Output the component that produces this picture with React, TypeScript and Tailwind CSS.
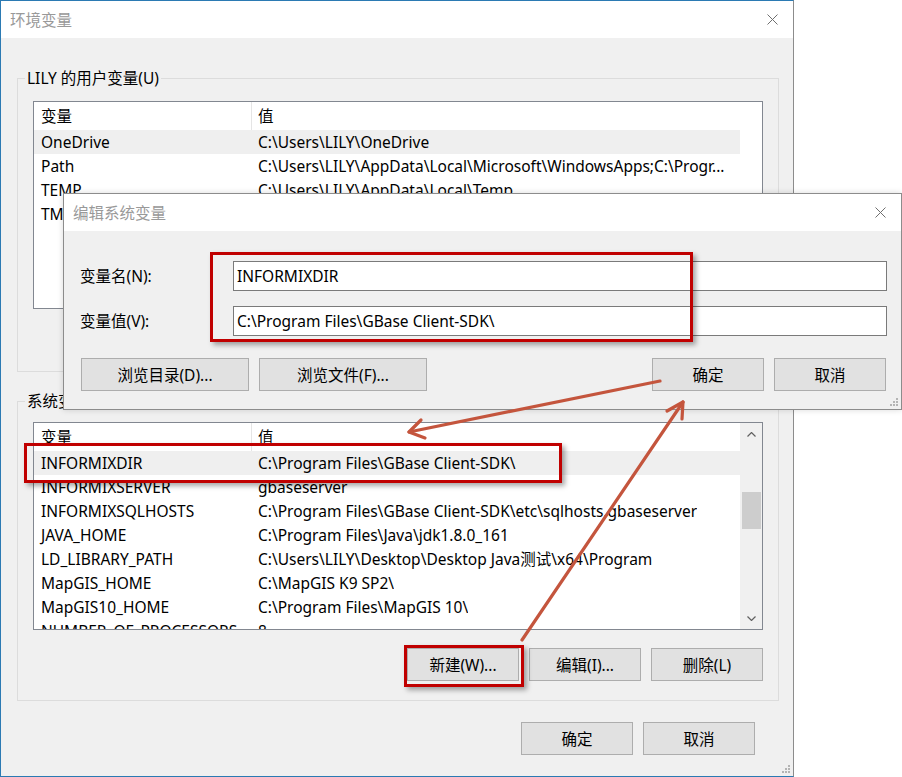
import React from 'react';

type Row = { name: string; value: string; selected?: boolean };

// 用户变量
const userVars: Row[] = [
  { name: 'OneDrive', value: 'C:\\Users\\LILY\\OneDrive', selected: true },
  { name: 'Path', value: 'C:\\Users\\LILY\\AppData\\Local\\Microsoft\\WindowsApps;C:\\Progr...' },
  { name: 'TEMP', value: 'C:\\Users\\LILY\\AppData\\Local\\Temp' },
  { name: 'TMP', value: 'C:\\Users\\LILY\\AppData\\Local\\Temp' },
];

// 系统变量
const sysVars: Row[] = [
  { name: 'INFORMIXDIR', value: 'C:\\Program Files\\GBase Client-SDK\\', selected: true },
  { name: 'INFORMIXSERVER', value: 'gbaseserver' },
  { name: 'INFORMIXSQLHOSTS', value: 'C:\\Program Files\\GBase Client-SDK\\etc\\sqlhosts.gbaseserver' },
  { name: 'JAVA_HOME', value: 'C:\\Program Files\\Java\\jdk1.8.0_161' },
  { name: 'LD_LIBRARY_PATH', value: 'C:\\Users\\LILY\\Desktop\\Desktop Java测试\\x64\\Program' },
  { name: 'MapGIS_HOME', value: 'C:\\MapGIS K9 SP2\\' },
  { name: 'MapGIS10_HOME', value: 'C:\\Program Files\\MapGIS 10\\' },
  { name: 'NUMBER_OF_PROCESSORS', value: '8' },
];

function WinButton({ label, className = '' }: { label: string; className?: string }) {
  return (
    <button
      className={`flex h-[33px] flex-none items-center justify-center border border-[#adadad] bg-[#e1e1e1] text-black ${className}`}
    >
      {label}
    </button>
  );
}

function CloseIcon() {
  return (
    <svg width="11" height="11" viewBox="0 0 11 11" className="flex-none">
      <path d="M0.5 0.5 L10.5 10.5 M10.5 0.5 L0.5 10.5" stroke="#6f6f6f" strokeWidth="1" />
    </svg>
  );
}

function Grip() {
  // 右下角的尺寸调整点
  const dots = [
    [6, 0],
    [3, 3],
    [6, 3],
    [0, 6],
    [3, 6],
    [6, 6],
  ];
  return (
    <svg width="9" height="9" viewBox="0 0 9 9" className="absolute bottom-[2px] right-[2px]">
      {dots.map(([x, y], i) => (
        <rect key={i} x={x} y={y} width="2" height="2" fill="#b4b4b4" />
      ))}
    </svg>
  );
}

function Scrollbar() {
  return (
    <div className="flex w-[22px] flex-none flex-col items-center bg-[#f0f0f0]">
      <div className="flex h-[22px] w-full items-center justify-center">
        <svg width="9" height="5" viewBox="0 0 9 5">
          <path d="M0.5 4.5 L4.5 0.5 L8.5 4.5" fill="none" stroke="#606060" strokeWidth="1.2" />
        </svg>
      </div>
      <div className="mt-[47px] h-[37px] w-[19px] bg-[#cdcdcd]" />
      <div className="flex-1" />
      <div className="flex h-[22px] w-full items-center justify-center">
        <svg width="9" height="5" viewBox="0 0 9 5">
          <path d="M0.5 0.5 L4.5 4.5 L8.5 0.5" fill="none" stroke="#606060" strokeWidth="1.2" />
        </svg>
      </div>
    </div>
  );
}

function VarList({ rows, scrollbar }: { rows: Row[]; scrollbar?: boolean }) {
  return (
    <div className="flex h-[208px] w-[730px] overflow-hidden border border-[#828790] bg-white">
      <div className="w-[706px] flex-none">
        {/* 表头 */}
        <div className="flex h-[28px] items-center">
          <div className="flex h-full w-[218px] items-center border-r border-[#e5e5e5] pl-[7px]">变量</div>
          <div className="pl-[6px]">值</div>
        </div>
        {rows.map((r) => (
          <div key={r.name} className={`flex h-[24px] items-center ${r.selected ? 'bg-[#efefef]' : ''}`}>
            <div className="w-[218px] flex-none overflow-hidden whitespace-nowrap pl-[7px]">{r.name}</div>
            <div className="overflow-hidden whitespace-nowrap pl-[6px]">{r.value}</div>
          </div>
        ))}
      </div>
      {scrollbar && <Scrollbar />}
    </div>
  );
}

function ActionRow() {
  return (
    <div className="flex w-[730px] justify-end gap-[10px]">
      <WinButton label="新建(W)..." className="w-[112px]" />
      <WinButton label="编辑(I)..." className="w-[112px]" />
      <WinButton label="删除(L)" className="w-[112px]" />
    </div>
  );
}

function EditDialog() {
  return (
    <div className="absolute left-[63px] top-[193px] flex h-[217px] w-[839px] flex-col border border-[#8c8c8c] bg-[#f0f0f0] shadow-[0_0_6px_rgba(0,0,0,0.15)]">
      <div className="flex h-[37px] flex-none items-center justify-between bg-white pl-[9px] pr-[15px]">
        <span className="text-[#999999]">编辑系统变量</span>
        <CloseIcon />
      </div>
      <div className="relative flex-1 pt-[30px]">
        <div className="flex h-[30px] items-center">
          <div className="w-[169px] flex-none pl-[16px]">变量名(N):</div>
          <div className="flex h-[30px] w-[654px] items-center border border-[#7a7a7a] bg-white pl-[3px]">INFORMIXDIR</div>
        </div>
        <div className="mt-[15px] flex h-[30px] items-center">
          <div className="w-[169px] flex-none pl-[16px]">变量值(V):</div>
          <div className="flex h-[30px] w-[654px] items-center border border-[#7a7a7a] bg-white pl-[3px]">
            C:\Program Files\GBase Client-SDK\
          </div>
        </div>
        <div className="mt-[22px] flex items-center pl-[17px] pr-[15px]">
          <WinButton label="浏览目录(D)..." className="w-[168px]" />
          <WinButton label="浏览文件(F)..." className="ml-[10px] w-[168px]" />
          <WinButton label="确定" className="ml-auto w-[112px]" />
          <WinButton label="取消" className="ml-[10px] w-[112px]" />
        </div>
        <Grip />
      </div>
    </div>
  );
}

function Annotations() {
  const c = '#c4553d';
  return (
    <>
      {/* 红色标注框 */}
      <div className="pointer-events-none absolute left-[210px] top-[252px] h-[90px] w-[483px] border-[3px] border-[#c00000] shadow-[3px_3px_5px_rgba(0,0,0,0.35)]" />
      <div className="pointer-events-none absolute left-[24px] top-[443px] h-[40px] w-[538px] border-[3px] border-[#c00000] shadow-[3px_3px_5px_rgba(0,0,0,0.35)]" />
      <div className="pointer-events-none absolute left-[404px] top-[645px] h-[42px] w-[120px] border-[3px] border-[#c00000] shadow-[3px_3px_5px_rgba(0,0,0,0.35)]" />
      {/* 箭头 */}
      <svg width="902" height="777" viewBox="0 0 902 777" className="pointer-events-none absolute left-0 top-0">
        <g stroke={c} strokeWidth="3.2" fill="none" strokeLinecap="round" strokeLinejoin="round">
          <path d="M660 381 L409 432" />
          <path d="M425 438 L409 432 L421 420" />
          <path d="M522 640 L683 402" />
          <path d="M667 411 L683 402 L682 419" />
        </g>
      </svg>
    </>
  );
}

export default function App() {
  return (
    <div className="relative h-[777px] w-[902px] overflow-hidden bg-white font-['Noto_Sans','Noto_Sans_CJK_SC',sans-serif] text-[15.5px] leading-[20px] text-black">
      {/* 环境变量 主窗口 */}
      <div className="flex h-[777px] w-[794px] flex-col border border-b-[#2b7ab3] border-l-[#2b7ab3] border-r-[#8c8c8c] border-t-[#2b7ab3]">
        <div className="flex h-[37px] flex-none items-center justify-between bg-white pl-[9px] pr-[15px]">
          <span className="text-[#999999]">环境变量</span>
          <CloseIcon />
        </div>
        <div className="relative flex flex-1 flex-col bg-[#f0f0f0]">
          <fieldset className="ml-[16px] mt-[30px] w-[762px] border border-[#dcdcdc] px-[15px] pb-[18px] pt-[13px]">
            <legend className="ml-[-8px] px-[2px]">LILY 的用户变量(U)</legend>
            <VarList rows={userVars} />
            <div className="mt-[11px]">
              <ActionRow />
            </div>
          </fieldset>
          <fieldset className="ml-[16px] mt-[19px] w-[762px] border border-[#dcdcdc] px-[15px] pb-[19px] pt-[11px]">
            <legend className="ml-[-8px] px-[2px]">系统变量(S)</legend>
            <VarList rows={sysVars} scrollbar />
            <div className="mt-[18px]">
              <ActionRow />
            </div>
          </fieldset>
          <div className="mr-[38px] mt-[21px] flex justify-end gap-[10px]">
            <WinButton label="确定" className="w-[112px]" />
            <WinButton label="取消" className="w-[112px]" />
          </div>
          <Grip />
        </div>
      </div>
      <EditDialog />
      <Annotations />
    </div>
  );
}
